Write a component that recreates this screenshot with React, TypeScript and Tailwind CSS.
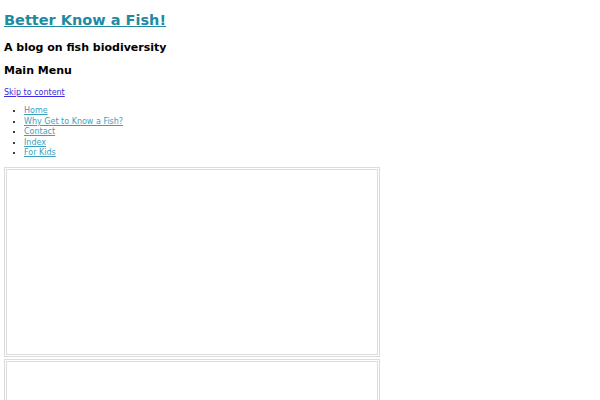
export default function App() {
  const menu = ["Home", "Why Get to Know a Fish?", "Contact", "Index", "For Kids"];
  return (
    <div className="min-h-[400px] overflow-hidden bg-white px-1 font-['DejaVu_Sans',sans-serif] text-black">
      <h1 className="pt-[11px] text-[14.5px] font-bold leading-[18px]">
        <a href="#" className="text-[#1f8aa2] underline">Better Know a Fish!</a>
      </h1>
      <h2 className="mt-[12px] text-[11px] font-bold leading-[14px]">A blog on fish biodiversity</h2>
      <h2 className="mt-[9px] text-[11px] font-bold leading-[14px]">Main Menu</h2>
      <a href="#" className="mt-[10px] block text-[8px] leading-[10px] text-[#3c2be0] underline">Skip to content</a>
      <ul className="mt-[8px] list-disc pl-5 text-[8px] leading-[10.5px]">
        {menu.map((m) => (
          <li key={m}>
            <a href="#" className="text-[#3b9fbf] underline">{m}</a>
          </li>
        ))}
      </ul>
      <div className="mt-[8px] h-[190px] w-[376px] border-[3px] border-double border-[#dcdcdc]" />
      <div className="mt-[2px] h-[190px] w-[376px] border-[3px] border-double border-[#dcdcdc]" />
    </div>
  );
}
